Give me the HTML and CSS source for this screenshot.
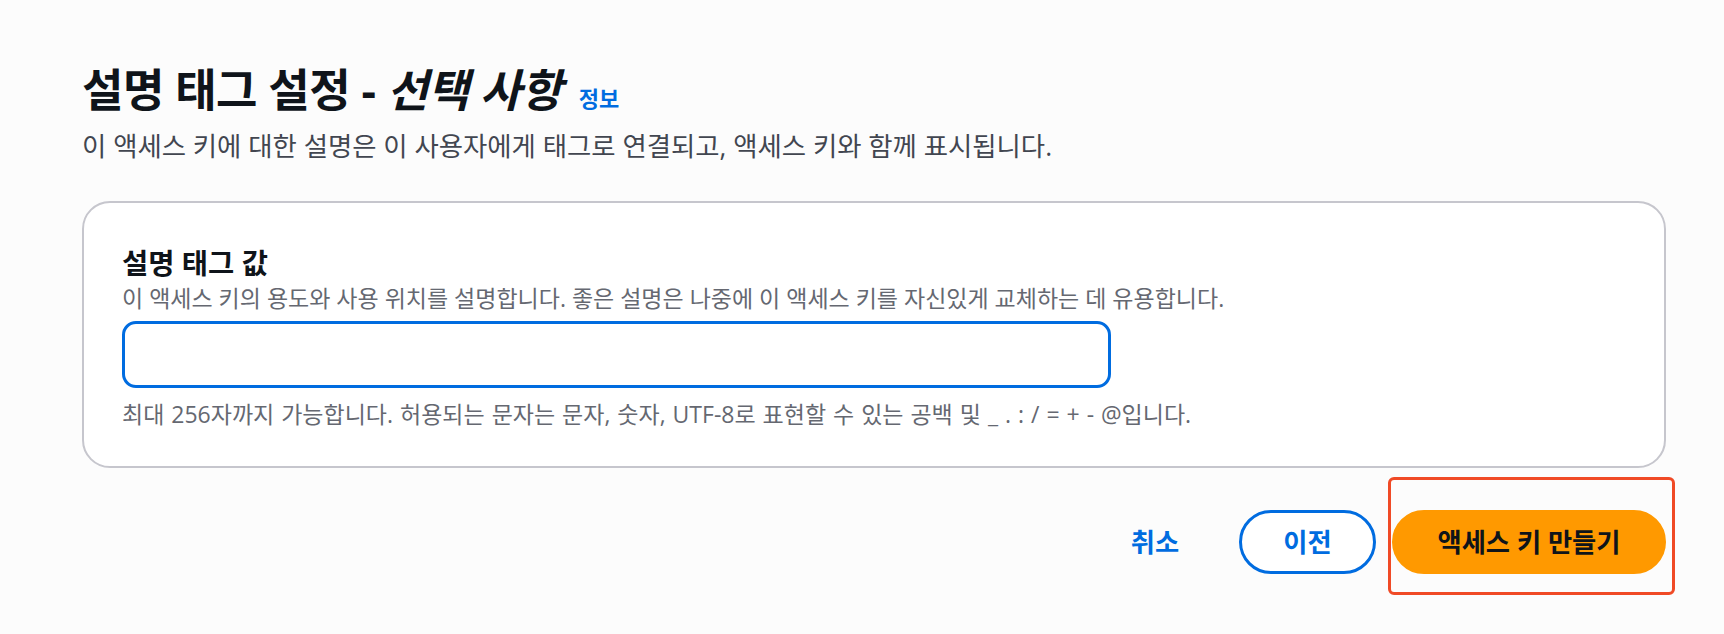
FILE: index.html
```html
<!DOCTYPE html>
<html lang="ko">
<head>
<meta charset="utf-8">
<title>설명 태그 설정</title>
<link rel="stylesheet" href="styles.css">
</head>
<body>
<main class="page">
  <header class="page-header">
    <h1 class="title">설명 태그 설정 - <i class="optional">선택 사항</i><a class="info" href="#">정보</a></h1>
    <p class="subtitle">이 액세스 키에 대한 설명은 이 사용자에게 태그로 연결되고, 액세스 키와 함께 표시됩니다.</p>
  </header>
  <section class="card">
    <label class="field-label" for="desc">설명 태그 값</label>
    <p class="field-desc">이 액세스 키의 용도와 사용 위치를 설명합니다. 좋은 설명은 나중에 이 액세스 키를 자신있게 교체하는 데 유용합니다.</p>
    <input class="text-input" id="desc" type="text">
    <p class="field-constraint">최대 256자까지 가능합니다. 허용되는 문자는 문자, 숫자, UTF-8로 표현할 수 있는 공백 및 _ . : / = + - @입니다.</p>
  </section>
  <div class="actions">
    <button class="btn btn-link" type="button">취소</button>
    <button class="btn btn-normal" type="button">이전</button>
    <div class="primary-wrap">
      <button class="btn btn-primary" type="button">액세스 키 만들기</button>
      <div class="highlight"></div>
    </div>
  </div>
</main>
</body>
</html>
```

FILE: styles.css
```css
* { box-sizing: border-box; }

html, body {
  margin: 0;
  padding: 0;
}

body {
  background: #fcfcfc;
  font-family: "Open Sans", "Noto Sans CJK KR", sans-serif;
  color: #0f141a;
}

.page {
  width: 1584px;
  margin-left: 82px;
  padding-top: 62px;
  padding-bottom: 60px;
}

.title {
  margin: 0;
  font-size: 45px;
  line-height: 56px;
  font-weight: 700;
  color: #0f141a;
  letter-spacing: -0.01em;
}

.optional {
  font-style: italic;
}

.info {
  margin-left: 17px;
  font-size: 22px;
  line-height: 22px;
  font-weight: 700;
  color: #006ce0;
  text-decoration: none;
  letter-spacing: 0;
}

.subtitle {
  margin: 10px 0 0;
  font-size: 26.4px;
  line-height: 36px;
  color: #424650;
}

.card {
  margin-top: 37px;
  background: #ffffff;
  border: 2px solid #c6c6cd;
  border-radius: 28px;
  padding: 42px 38px 37px 38px;
  display: flex;
  flex-direction: column;
  align-items: flex-start;
}

.field-label {
  display: block;
  font-size: 28.5px;
  line-height: 36px;
  font-weight: 700;
  color: #0f141a;
}

.field-desc,
.field-constraint {
  font-size: 23px;
  line-height: 30px;
  color: #656871;
}

.field-desc {
  margin: 1.5px 0 0;
}

.text-input {
  margin-top: 8.5px;
  width: 989px;
  height: 67px;
  border: 3.5px solid #006ce0;
  border-radius: 14px;
  background: #ffffff;
  outline: none;
  font: inherit;
}

.field-constraint {
  margin: 11px 0 0;
  word-spacing: 1px;
}

.actions {
  margin-top: 42px;
  display: flex;
  justify-content: flex-end;
  align-items: center;
  gap: 16px;
}

.btn {
  height: 64px;
  padding: 0;
  border: 3.5px solid transparent;
  border-radius: 32px;
  font-family: "Open Sans", "Noto Sans CJK KR", sans-serif;
  font-size: 26.3px;
  font-weight: 700;
  line-height: 1;
  background: transparent;
  cursor: pointer;
  text-align: center;
}

.btn-link {
  width: 136px;
  color: #006ce0;
}

.btn-normal {
  width: 137px;
  color: #006ce0;
  border-color: #006ce0;
  background: #ffffff;
}

.btn-primary {
  width: 274px;
  color: #0f141a;
  background: #ff9900;
  border-color: #ff9900;
}

.primary-wrap {
  position: relative;
  display: flex;
  height: 64px;
}

.highlight {
  position: absolute;
  left: -4px;
  top: -33px;
  width: 287px;
  height: 118px;
  border: 3px solid #f04a26;
  border-radius: 6px;
  pointer-events: none;
}
```
